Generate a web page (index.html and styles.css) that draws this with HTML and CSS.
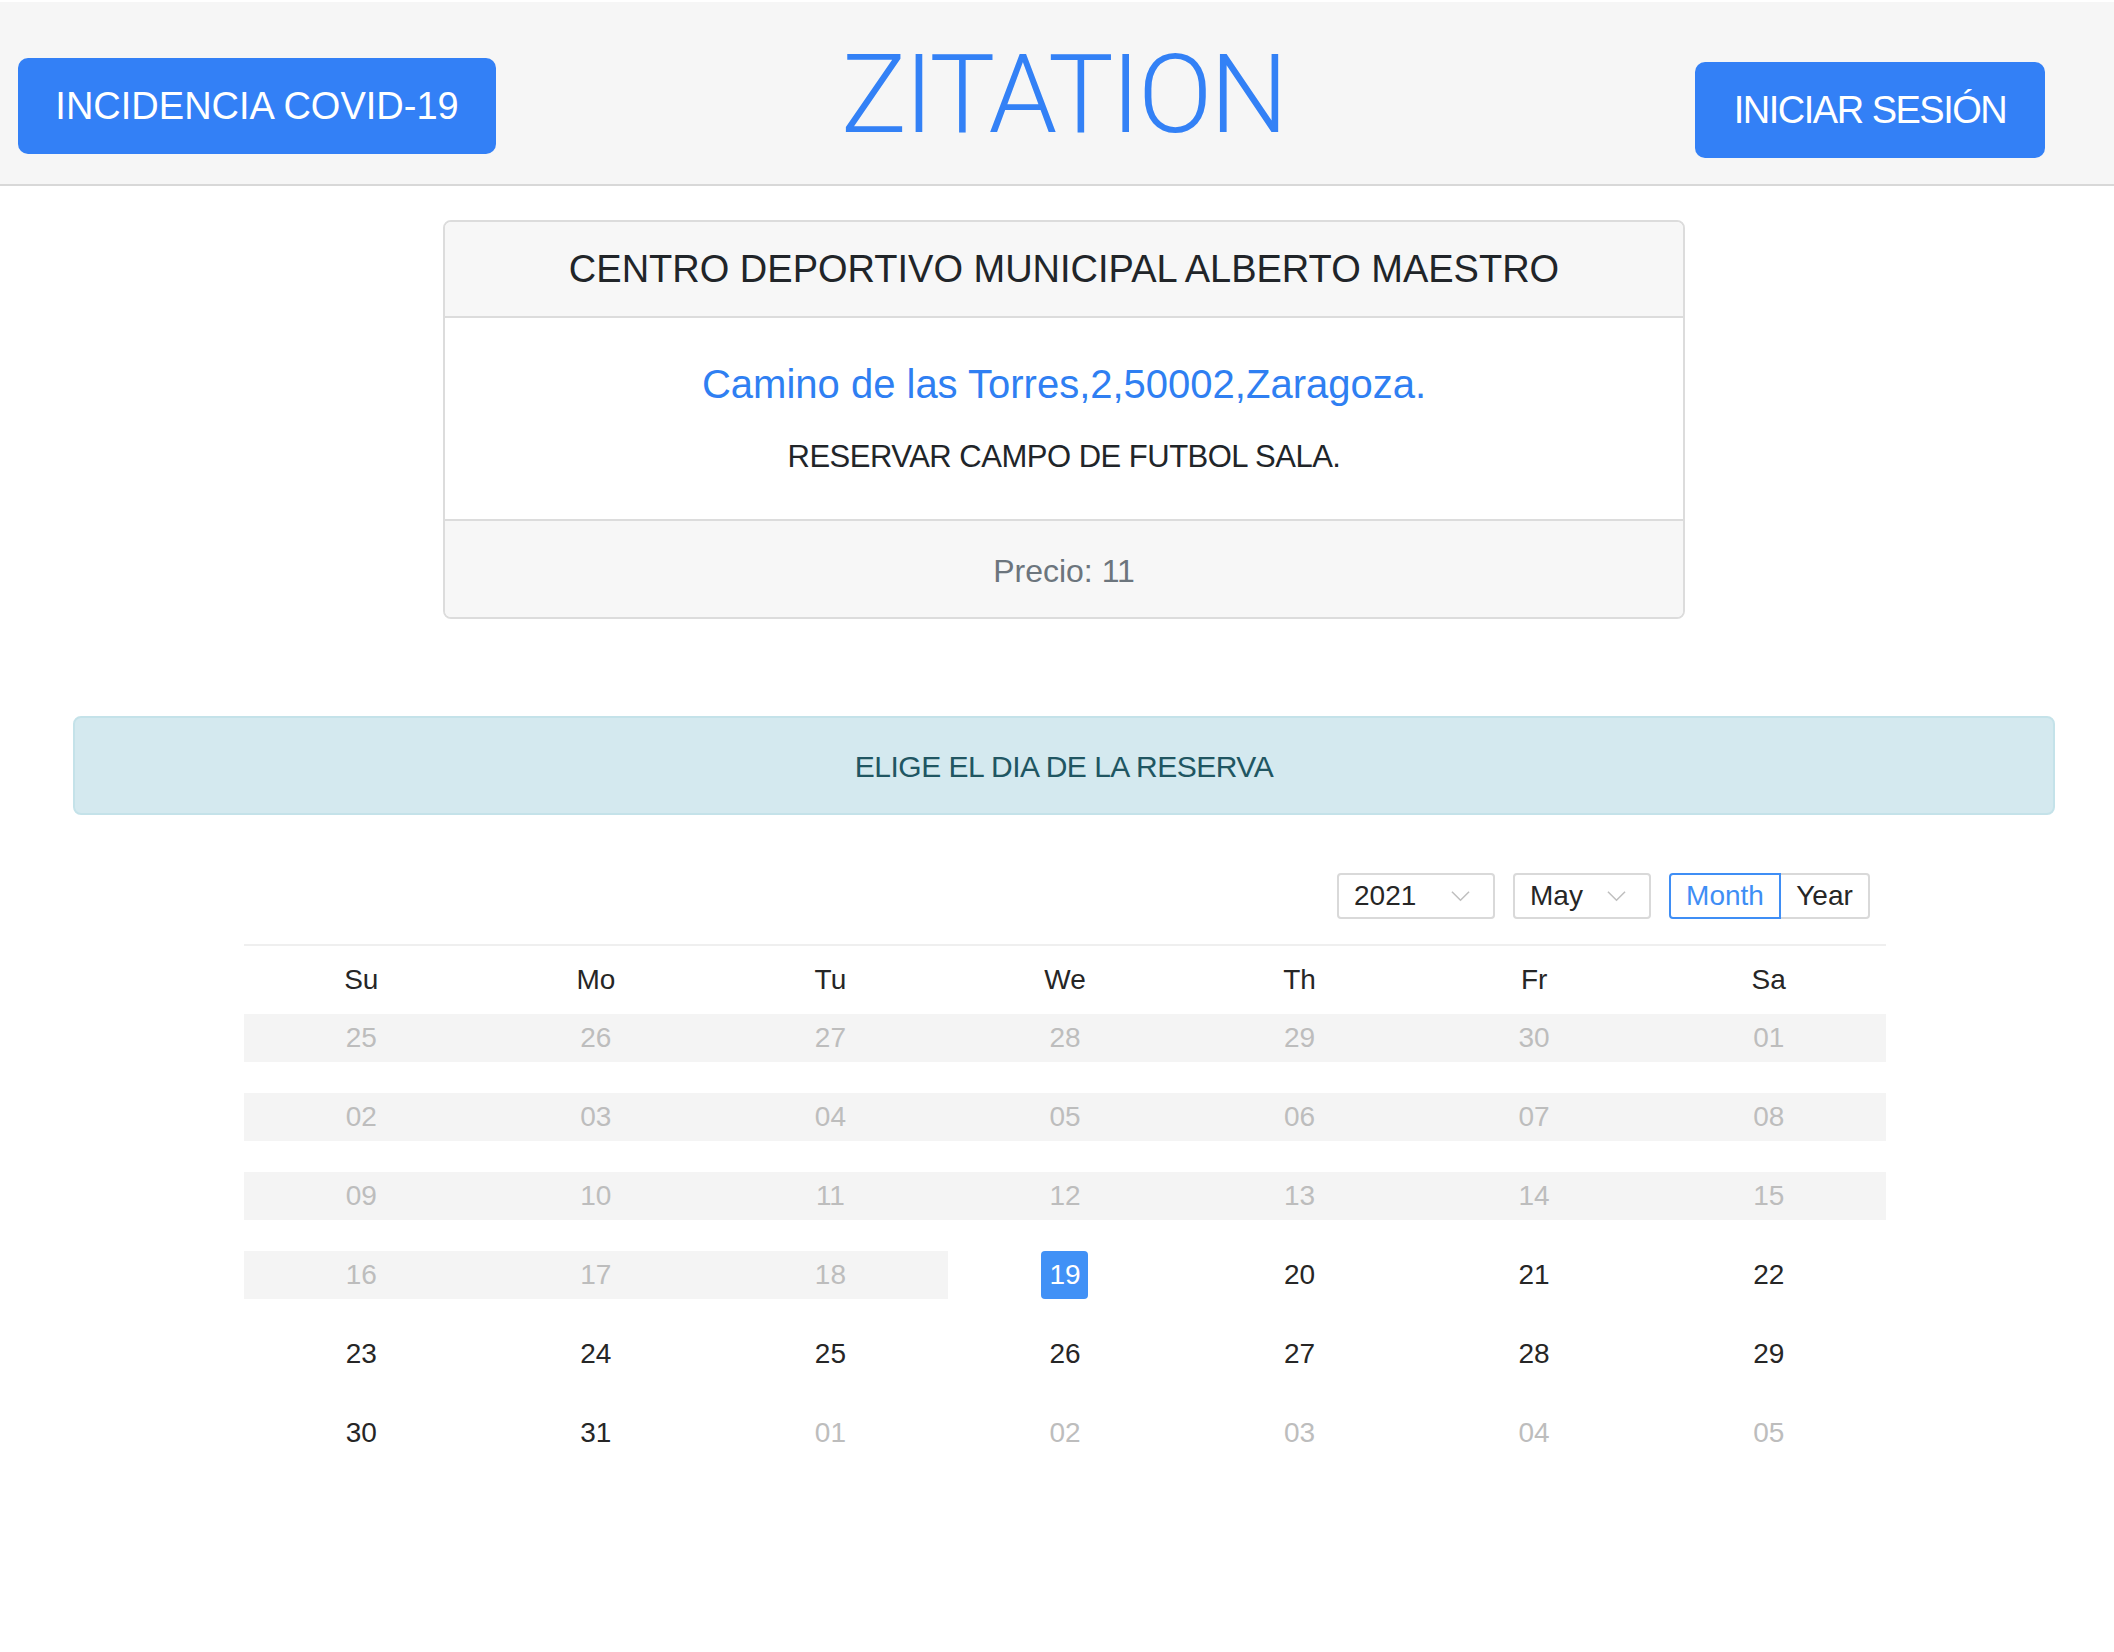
FILE: index.html
```html
<!DOCTYPE html>
<html lang="es">
<head>
<meta charset="utf-8">
<title>Zitation</title>
<link rel="stylesheet" href="styles.css">
</head>
<body>
<header class="topbar">
  <a class="btn btn-covid" href="#">INCIDENCIA COVID-19</a>
  <h1 class="brand">ZITATION</h1>
  <a class="btn btn-login" href="#">INICIAR SESIÓN</a>
</header>
<main class="page">
  <section class="card">
    <div class="card-header">CENTRO DEPORTIVO MUNICIPAL ALBERTO MAESTRO</div>
    <div class="card-body">
      <h5 class="address">Camino de las Torres,2,50002,Zaragoza.</h5>
      <p class="card-text">RESERVAR CAMPO DE FUTBOL SALA.</p>
    </div>
    <div class="card-footer">Precio: 11</div>
  </section>

  <div class="alert">ELIGE EL DIA DE LA RESERVA</div>

  <section class="calendar">
    <div class="cal-header">
      <div class="select select-year"><span>2021</span><svg class="chev" viewBox="0 0 20 12"><path d="M1 1.5 L10 10.5 L19 1.5"/></svg></div>
      <div class="select select-month"><span>May</span><svg class="chev" viewBox="0 0 20 12"><path d="M1 1.5 L10 10.5 L19 1.5"/></svg></div>
      <div class="mode">
        <span class="mode-btn mode-month active">Month</span>
        <span class="mode-btn mode-year">Year</span>
      </div>
    </div>
    <div class="weekdays">
      <span>Su</span><span>Mo</span><span>Tu</span><span>We</span><span>Th</span><span>Fr</span><span>Sa</span>
    </div>
    <div class="days">
      <span class="day off">25</span><span class="day off">26</span><span class="day off">27</span><span class="day off">28</span><span class="day off">29</span><span class="day off">30</span><span class="day off">01</span>
      <span class="day off">02</span><span class="day off">03</span><span class="day off">04</span><span class="day off">05</span><span class="day off">06</span><span class="day off">07</span><span class="day off">08</span>
      <span class="day off">09</span><span class="day off">10</span><span class="day off">11</span><span class="day off">12</span><span class="day off">13</span><span class="day off">14</span><span class="day off">15</span>
      <span class="day off">16</span><span class="day off">17</span><span class="day off">18</span><span class="day"><b class="selected">19</b></span><span class="day">20</span><span class="day">21</span><span class="day">22</span>
      <span class="day">23</span><span class="day">24</span><span class="day">25</span><span class="day">26</span><span class="day">27</span><span class="day">28</span><span class="day">29</span>
      <span class="day">30</span><span class="day">31</span><span class="day out">01</span><span class="day out">02</span><span class="day out">03</span><span class="day out">04</span><span class="day out">05</span>
    </div>
  </section>
</main>
</body>
</html>
```

FILE: styles.css
```css
* { box-sizing: border-box; }
html, body { margin: 0; padding: 0; background: #fff; }
body {
  font-family: "Liberation Sans", Arial, sans-serif;
  color: #212529;
  width: 2114px;
}

/* ---------- top bar ---------- */
.topbar {
  margin-top: 2px;
  height: 184px;
  background: #f6f6f6;
  border-bottom: 2px solid #d8d8d8;
  display: flex;
  align-items: flex-start;
}
.btn {
  display: block;
  height: 96px;
  line-height: 96px;
  background: #3380f6;
  color: #fff;
  text-decoration: none;
  text-align: center;
  border-radius: 10px;
  font-size: 38px;
  white-space: nowrap;
}
.btn-covid {
  width: 478px;
  margin-left: 18px;
  margin-top: 56px;
}
.btn-login {
  width: 350px;
  margin-left: auto;
  margin-right: 69px;
  margin-top: 60px;
  letter-spacing: -1.5px;
}
.brand {
  margin: 38px 0 0 345px;
  font-family: Roboto, "Liberation Sans", sans-serif;
  font-weight: 300;
  font-size: 110px;
  line-height: 110px;
  letter-spacing: -2.5px;
  color: #3381f6;
}

/* ---------- main ---------- */
.page {
  margin-left: 14px;
  display: flex;
  flex-direction: column;
  align-items: center;
  padding-bottom: 150px;
}

.card {
  width: 1242px;
  margin-top: 34px;
  border: 2px solid #dcdcdc;
  border-radius: 8px;
  overflow: hidden;
  text-align: center;
}
.card-header {
  height: 96px;
  line-height: 94px;
  background: #f7f7f7;
  border-bottom: 2px solid #dcdcdc;
  font-size: 38px;
  color: #212529;
}
.card-body {
  height: 201px;
  padding-top: 42px;
}
.address {
  margin: 0;
  font-size: 40px;
  line-height: 48px;
  font-weight: 400;
  color: #2f7ff2;
}
.card-text {
  margin: 26px 0 0;
  font-size: 31px;
  line-height: 46px;
  letter-spacing: -0.5px;
  color: #212529;
}
.card-footer {
  height: 98px;
  line-height: 100px;
  background: #f7f7f7;
  border-top: 2px solid #dcdcdc;
  font-size: 32px;
  color: #6c757d;
}

.alert {
  align-self: stretch;
  margin: 97px 59px 0;
  height: 99px;
  line-height: 97px;
  background: #d4e9ef;
  border: 2px solid #c4e2e9;
  border-radius: 8px;
  text-align: center;
  font-size: 30px;
  letter-spacing: -0.5px;
  color: #205662;
}

/* ---------- calendar ---------- */
.calendar {
  width: 1642px;
  margin-top: 58px;
  margin-left: 2px;
  font-size: 28px;
  color: #262626;
}
.cal-header {
  display: flex;
  justify-content: flex-end;
  align-items: center;
  padding-right: 16px;
  padding-bottom: 25px;
  border-bottom: 2px solid #efefef;
  gap: 18px;
}
.select {
  height: 46px;
  border: 2px solid #d9d9d9;
  border-radius: 4px;
  display: flex;
  align-items: center;
  justify-content: space-between;
  padding: 0 23px 0 15px;
  line-height: 42px;
}
.select-year { width: 158px; }
.select-month { width: 138px; }
.chev {
  width: 19px;
  height: 12px;
  fill: none;
  stroke: #bfbfbf;
  stroke-width: 1.6;
}
.mode {
  display: flex;
  height: 46px;
}
.mode-btn {
  display: block;
  height: 46px;
  line-height: 42px;
  text-align: center;
  border: 2px solid #d9d9d9;
}
.mode-month {
  width: 112px;
  border-color: #3f8ef5;
  color: #3f8ef5;
  border-radius: 4px 0 0 4px;
}
.mode-year {
  width: 89px;
  border-left: none;
  border-radius: 0 4px 4px 0;
  color: #262626;
}

.weekdays {
  display: grid;
  grid-template-columns: repeat(7, 1fr);
  margin-top: 10px;
  height: 48px;
  line-height: 48px;
  text-align: center;
}
.days {
  display: grid;
  grid-template-columns: repeat(7, 1fr);
  grid-auto-rows: 48px;
  row-gap: 31px;
  margin-top: 10px;
  text-align: center;
  line-height: 48px;
}
.day { display: block; color: #262626; }
.day.off { background: #f4f4f4; color: #bdbdbd; }
.day.out { color: #bdbdbd; }
.selected {
  display: inline-block;
  width: 47px;
  height: 48px;
  line-height: 48px;
  font-weight: 400;
  background: #4191f6;
  color: #fff;
  border-radius: 4px;
}
```
